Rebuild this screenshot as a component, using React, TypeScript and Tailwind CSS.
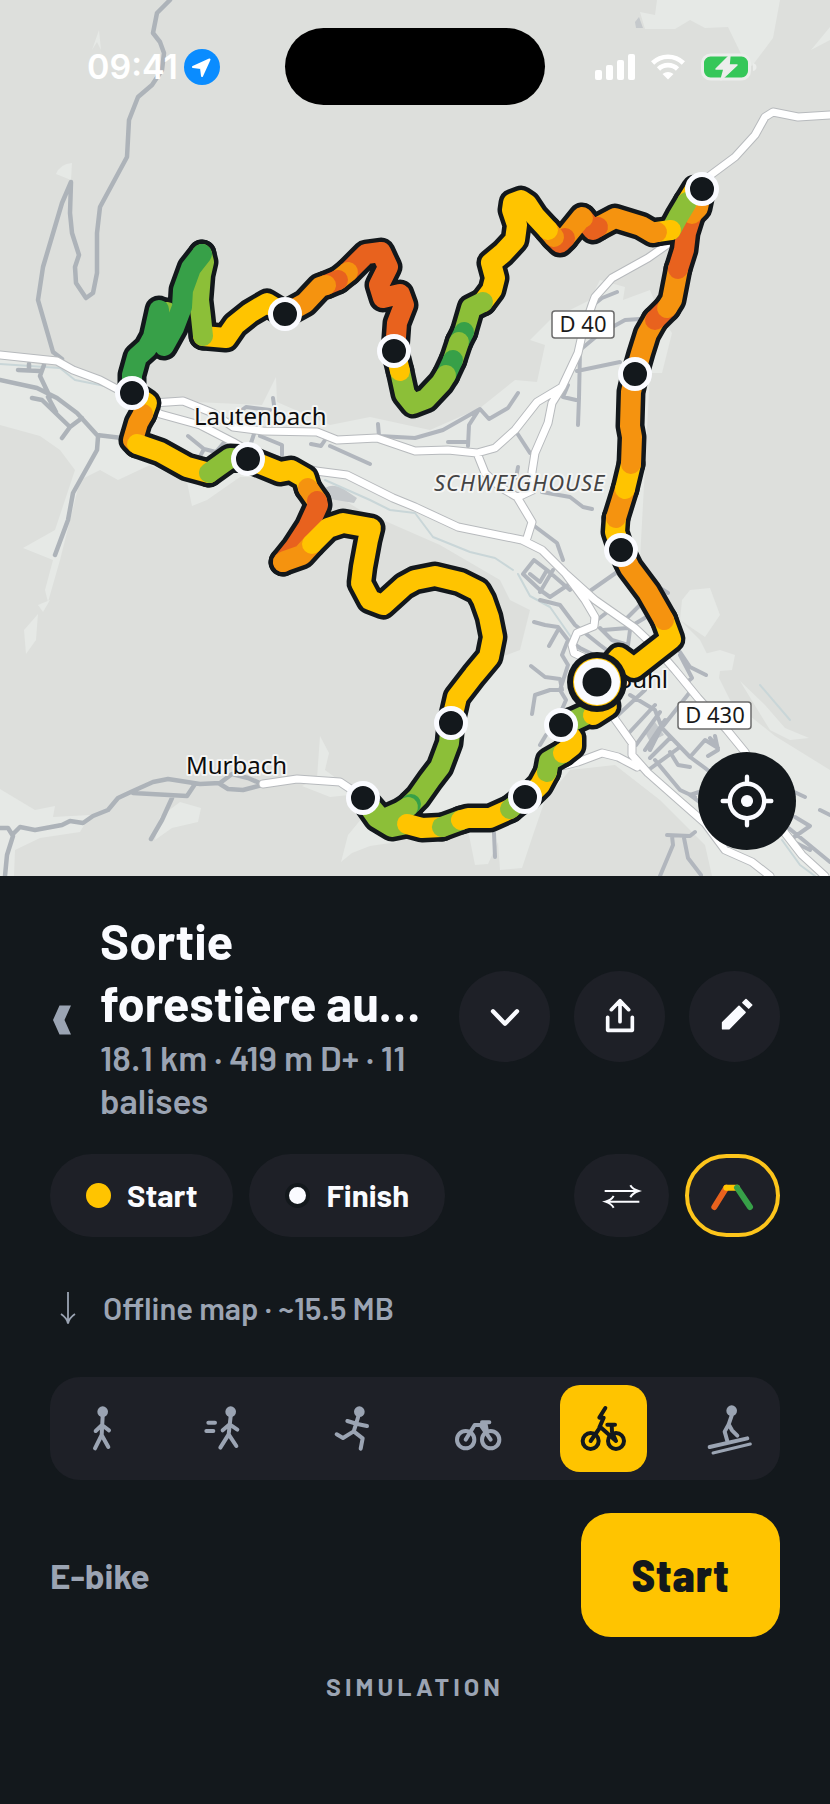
import { useState, type ReactNode } from 'react'

const YELLOW = '#ffc400'
const ORANGE = '#f5930f'
const DEEP = '#e8621e'
const LIME = '#8cbf38'
const GREEN = '#37a048'
const INK = '#13181c'

// Ordered from the departure; earlier sections are painted over later ones.
const sections: { color: string; points: string }[] = [
  { color: YELLOW, points: '597,690 607,706 593,715' },
  { color: LIME, points: '590,713 575,720 561,725' },
  { color: YELLOW, points: '561,725 572,738 572,746 563,753' },
  { color: LIME, points: '563,753 549,761 547,772' },
  { color: YELLOW, points: '547,772 540,785 528,797' },
  { color: LIME, points: '525,797 510,809' },
  { color: YELLOW, points: '510,809 490,818 468,818 461,820' },
  { color: LIME, points: '461,820 442,827' },
  { color: YELLOW, points: '442,827 422,828 407,824' },
  { color: LIME, points: '407,824 392,827 377,818 363,798 382,820 400,812 408,807' },
  { color: GREEN, points: '408,807 411,804' },
  { color: LIME, points: '411,804 418,797 430,780 440,767 449,743 451,723' },
  {
    color: YELLOW,
    points:
      '451,723 457,697 474,675 489,657 493,637 489,617 483,600 478,591 460,582 435,576 415,580 404,586 383,605 370,600 361,583 363,567 368,540 371,528 343,523 328,528 312,544',
  },
  { color: ORANGE, points: '312,544 302,555 285,561 283,562' },
  { color: DEEP, points: '283,562 295,547 308,527 318,505 317,501' },
  { color: ORANGE, points: '317,501 308,488' },
  { color: YELLOW, points: '308,488 305,478 291,470 280,472 248,459' },
  { color: LIME, points: '248,459 230,458 209,473' },
  { color: YELLOW, points: '209,473 187,467 160,452 137,444' },
  { color: ORANGE, points: '137,444 133,440 138,423 143,414' },
  { color: YELLOW, points: '143,414 147,403 132,393' },
  {
    color: GREEN,
    points:
      '132,393 132,375 137,357 147,348 153,337 159,310 160,325 164,346 174,328 182,307 183,290 191,268 202,254',
  },
  { color: LIME, points: '167,312 166,325' },
  { color: LIME, points: '202,254 204,262 201,275 199,300 201,317 203,336' },
  { color: YELLOW, points: '203,336 226,338 235,325 250,313 267,303 285,314' },
  { color: ORANGE, points: '285,314 305,303 320,287 326,285' },
  { color: DEEP, points: '326,285 338,280' },
  { color: ORANGE, points: '338,280 348,272' },
  {
    color: DEEP,
    points: '348,272 366,254 381,252 388,267 379,285 383,298 400,294 404,305 397,323 395,351',
  },
  { color: YELLOW, points: '395,351 400,371' },
  { color: LIME, points: '400,371 405,394 413,404 426,399 441,383 446,375' },
  { color: GREEN, points: '446,375 453,360' },
  { color: LIME, points: '453,360 459,342' },
  { color: GREEN, points: '459,342 464,332' },
  { color: LIME, points: '464,332 471,308 483,302' },
  {
    color: YELLOW,
    points: '483,302 492,290 495,278 491,263 503,253 515,240 517,225 512,210 513,203 521,200 527,204 535,216 548,230',
  },
  { color: ORANGE, points: '548,230 554,237' },
  { color: DEEP, points: '554,237 560,243 565,238' },
  { color: ORANGE, points: '565,238 582,217 583,218' },
  { color: DEEP, points: '583,218 593,230 598,227' },
  { color: ORANGE, points: '598,227 615,218 641,226 653,233 657,232' },
  { color: YELLOW, points: '657,232 671,230' },
  { color: LIME, points: '671,230 678,217 687,202' },
  { color: YELLOW, points: '687,202 695,189 702,189' },
  { color: ORANGE, points: '702,189 698,208 692,214' },
  { color: DEEP, points: '692,214 686,233 684,250 678,269' },
  { color: ORANGE, points: '678,269 672,300 667,308' },
  { color: DEEP, points: '667,308 655,320' },
  { color: ORANGE, points: '655,320 647,334 641,353 635,374 631,392 630,426 632,437 631,464' },
  { color: YELLOW, points: '631,464 625,489' },
  { color: ORANGE, points: '625,489 616,518' },
  { color: YELLOW, points: '616,518 615,532 621,550' },
  { color: ORANGE, points: '621,550 630,568 648,592 664,620' },
  { color: YELLOW, points: '664,620 671,639 634,668 619,657 597,682' },
]

const waypoints = [
  [702, 189],
  [635, 374],
  [621, 550],
  [394, 351],
  [285, 314],
  [132, 393],
  [248, 459],
  [451, 723],
  [363, 798],
  [525, 797],
  [561, 725],
]

const clearings = [
  'M657 0 L655 15 L640 12 L645 29 L675 29 L690 20 L705 28 L728 27 L745 62 L752 66 L773 38 L780 0Z',
  'M811 50 L830 27 L830 40Z',
  'M56 174 Q60 164 72 163 L71 180Z',
  'M92 50 L99 30 L101 50 L97 42Z',
  'M0 358 L60 368 L130 398 L195 402 L262 405 L276 377 L277 402 L330 425 L370 417 L430 430 L480 408 L515 380 L537 382 L545 345 L530 340 L550 320 L590 300 L600 280 L625 287 L623 300 L650 290 L660 315 L672 333 L662 373 L650 373 L640 560 L660 600 L700 640 L730 700 L775 736 L830 770 L830 876 L712 876 L705 845 L660 800 L615 765 L570 770 L545 800 L533 835 L522 868 L500 870 L498 842 L488 864 L475 865 L468 830 L420 836 L395 822 L425 805 L430 790 L470 700 L480 665 L520 650 L530 610 L510 600 L500 580 L440 545 L360 510 L310 478 L240 477 L207 500 L192 506 L187 482 L150 465 L118 480 L100 470 L80 480 L60 560 L48 602 L45 590 L53 560 L23 548 L55 530 L75 470 L60 450 L40 436 L0 425Z',
  'M38 605 L50 600 L43 612Z M24 630 L38 614 L36 640 L26 654Z',
  'M0 789 L35 810 L55 806 L53 817 L90 815 L80 832 L40 838 L15 850 L14 876 L0 876Z',
  'M160 817 L180 802 L201 808 L198 822 L172 828 L155 840Z',
  'M317 778 L320 736 L329 753 L325 770 L340 781 L349 795 L330 797 L302 786Z',
  'M362 818 L388 826 L397 842 L370 846 L352 853 L341 862 L348 835Z',
  'M682 600 L690 590 L710 588 L720 615 L705 637 L680 620Z',
  'M700 655 L720 650 L735 655 L732 670 L720 671 L718 685Z',
  'M740 681 L765 705 L785 728 L809 738 L790 740 L770 730Z',
]

const lanes =
  'M170 0 L157 13 L153 33 L160 42 L164 53 L162 70 L152 85 L138 97 L129 120 L127 157 L100 207 L97 233 L97 273 L93 293 L86 298 L76 283 L75 267 L79 255 L72 233 L70 213 L71 182 L62 203 L43 267 L38 300 L53 352 L62 359 M0 380 L37 388 L57 398 L77 413 L97 435 L122 438 M98 437 L97 450 L73 493 L68 520 L55 555 M44 365 L40 376 L50 397 M32 398 L42 400 L70 427 L62 438 M18 370 L40 371 M29 364 L29 370 M48 397 L56 412 M70 427 L82 418' +
  ' M0 828 L8 828 L13 836 L7 855 L5 876 M13 834 L20 827 L35 830 L62 825 L70 821 L83 823 L93 816 L108 810 L118 798 L133 791 L153 782 L168 779 L200 784 L220 783 L232 774 L248 778 L262 784 M220 784 L228 789 L243 790 L262 785 M133 793 L187 796 L195 784 M172 798 L162 820 L151 839'

const streets =
  'M188 436 L204 449 L198 460 M204 449 L216 452 L226 440 M226 422 L246 407 L270 410 M273 398 L274 405 M260 436 L282 445 L282 455 M250 446 L254 434 M311 444 L321 446 L325 440 M330 446 L370 464 M378 424 L379 436 L415 438 L443 430 L480 409 L489 419 L508 408 L518 393 M478 411 L469 425 L468 446 M448 442 L468 442 M517 433 L530 453 M620 362 L577 371 M580 350 L579 398 L578 425 M580 350 L598 335 L625 320 L640 319 M568 385 L563 397 L576 400 M592 306 L602 298 L617 292 M518 467 L516 478 M542 492 L570 497 L583 507 L592 509' +
  ' M533 525 L557 543 L563 560 M534 560 L523 574 L540 590 L550 597 L568 585 M534 560 L547 570 L540 582 L530 574 M547 570 L570 590 M553 570 L540 592 M590 591 L620 570 M660 588 L668 593 M534 622 L545 625 L558 627 L568 640 L580 648 L598 657 M558 630 L549 646 M568 640 L562 655 L568 665 L560 690 L566 700 L560 714 M531 666 L545 677 L560 679 L562 690 L550 690 L535 695 L532 714 M540 600 L560 605 L575 625 L600 645 L620 660 M597 620 L610 610 L625 620 L640 605 M600 628 L612 640 L628 645 L630 630 M603 630 L628 628 L648 616 M680 652 L690 667 L706 675 M680 655 L692 678 L685 684' +
  ' M630 695 L655 710 L662 728 L690 757 L705 768 M645 690 L618 715 M655 705 L627 735 M660 712 L636 745 M665 720 L645 750 M645 750 L660 730 L690 692 M660 730 L650 750 M670 738 L650 758 M680 747 L647 771 M690 757 L705 740 L718 748 L710 738 M705 768 L720 780 L700 795 L735 765 M655 760 L680 790 L695 797 M715 736 L718 750 L708 756 M670 752 L678 765 L690 767 M735 780 L690 795 L710 810 M494 833 L495 857 M540 745 L546 735 M790 790 L805 797 M795 817 L810 826 L790 840 L810 850 M820 810 L830 815 M785 825 L830 862 M667 835 L690 836 L695 832 M672 836 L673 845 L660 876 M684 838 L688 858 L701 875'

const roads =
  'M0 355 L57 361 L73 370 L100 380 L132 397 L160 414 L200 425 L233 442 L250 452 L316 471 L347 475 L393 498 L415 507 L458 527 L522 540 L542 550 L565 573 L595 600 L635 628 L655 647 L675 670 L698 698 L727 730 L745 752 L785 833 L802 855 L825 876 M565 573 L585 600 L595 617 L594 626 L577 633 L572 645 L574 653 L585 658 M597 690 L612 715 L632 743 L632 755 L648 773 L682 803 L705 823 L725 850 L752 862 L770 876 M562 766 L578 762 L602 753 L618 757 L637 767 M153 403 L183 401 L213 413 L233 427 L263 431 L317 432 L337 440 L377 438 L415 451 L448 450 L477 453 L495 448 L515 430 L537 402 L562 387 L578 353 L582 335 L592 305 L595 297 L612 278 L648 258 L668 244 M704 180 L735 157 L755 135 L765 117 L773 112 L798 117 L830 115 M562 387 L552 403 L548 423 L535 453 L532 472 L533 490 L518 497 M477 453 L485 473 L500 487 L517 497 L532 522 L527 538 M263 784 L297 779 L340 782 L358 794'

const rivers =
  'M0 364 L60 368 L75 380 L110 387 M325 480 L370 500 L390 510 L415 513 L433 537 L470 552 L495 558 L513 570 M518 574 L530 596 L550 607 L580 650 M760 685 L790 720 M782 840 L800 865 L815 876'

function TrailMap() {
  return (
    <svg viewBox="0 0 830 876" className="block h-auto w-full bg-[#dddfdc]" role="img" aria-label="Trail map">
      <g fill="#e6e9e6">
        {clearings.map((d) => (
          <path key={d} d={d} />
        ))}
      </g>
      <g fill="#c5c9cc">
        <path d="M639 17 L643 28 L636 28 L635 22Z" />
        <path d="M325 488 Q335 482 348 492 L357 498 L354 503 L330 499Z" />
        <path d="M645 732 L655 722 L664 735 L650 742Z" />
      </g>
      <g fill="none" strokeLinecap="round" strokeLinejoin="round">
        <path d={rivers} stroke="#c9d6d8" strokeWidth="2" />
        <path d={lanes} stroke="#adb3b9" strokeWidth="4.5" />
        <path d={streets} stroke="#b1b6bd" strokeWidth="4" />
        <path d={roads} stroke="#b7babd" strokeWidth="9" />
        <path d={roads} stroke="#ffffff" strokeWidth="7" />
      </g>

      <g
        className="font-['Noto_Sans',sans-serif]"
        fill="#0c0c0c"
        stroke="#f4f5f4"
        strokeWidth="4"
        strokeLinejoin="round"
        style={{ paintOrder: 'stroke' }}
      >
        <text x="194" y="425" className="text-[24px]">
          Lautenbach
        </text>
        <text x="186" y="774" className="text-[24px]">
          Murbach
        </text>
        <text x="668" y="688" textAnchor="end" className="text-[24px]">
          Buhl
        </text>
        <text x="434" y="491" fill="#444444" className="text-[22px] tracking-[1px] italic">
          SCHWEIGHOUSE
        </text>
      </g>
      <g className="font-['Noto_Sans',sans-serif] text-[22px]" fill="#1a1a1a" textAnchor="middle">
        <rect x="552" y="311" width="62" height="27" rx="3" fill="#fff" stroke="#6b6b6b" strokeWidth="1.5" />
        <text x="583" y="332">
          D 40
        </text>
        <rect x="678" y="702" width="73" height="27" rx="3" fill="#fff" stroke="#6b6b6b" strokeWidth="1.5" />
        <text x="715" y="723">
          D 430
        </text>
      </g>

      <g fill="none" strokeLinecap="round" strokeLinejoin="round">
        {sections.map((s) => (
          <polyline key={s.points} points={s.points} stroke={INK} strokeWidth="29" />
        ))}
        {[...sections].reverse().map((s) => (
          <polyline key={s.points} points={s.points} stroke={s.color} strokeWidth="20" />
        ))}
      </g>
      {waypoints.map(([x, y]) => (
        <circle key={`${x}-${y}`} cx={x} cy={y} r="14.5" fill={INK} stroke="#fafbff" strokeWidth="5" />
      ))}
      <circle cx="597" cy="682" r="30" fill={INK} />
      <circle cx="597" cy="682" r="24" fill={YELLOW} />
      <circle cx="597" cy="682" r="23" fill="#fafbff" />
      <circle cx="597" cy="682" r="14.5" fill={INK} />
    </svg>
  )
}

function StatusBar() {
  return (
    <div className="absolute inset-x-0 top-7 grid h-[77px] grid-cols-[1fr_auto_1fr] items-center">
      <div className="flex items-center gap-[6px] pl-[87px]">
        <span className="font-['Inter',sans-serif] text-[34px] leading-none font-semibold text-white">09:41</span>
        <svg viewBox="0 0 36 36" className="size-9 shrink-0">
          <circle cx="18" cy="18" r="18" fill="#0a8cff" />
          <path d="M25.5 10.5 L18 27 L17 19 L9 18Z" fill="#fff" stroke="#fff" strokeWidth="2" strokeLinejoin="round" />
        </svg>
      </div>
      <div className="h-[77px] w-[260px] rounded-full bg-black" />
      <div className="flex items-center justify-end gap-4 pr-[73px]">
        <svg viewBox="0 0 40 26" className="h-[26px] w-10" fill="#fff">
          <rect x="0" y="16" width="7" height="10" rx="2" />
          <rect x="11" y="11" width="7" height="15" rx="2" />
          <rect x="22" y="6" width="7" height="20" rx="2" />
          <rect x="33" y="0" width="7" height="26" rx="2" />
        </svg>
        <svg viewBox="0 0 34 26" className="h-[26px] w-[34px]" fill="none" stroke="#fff" strokeWidth="4.6">
          <path d="M1.6 9 A22 22 0 0 1 32.4 9" />
          <path d="M7.5 15 A13.5 13.5 0 0 1 26.5 15" />
          <path d="M17 25.5 L11.5 20 Q17 15.8 22.5 20Z" fill="#fff" stroke="none" />
        </svg>
        <svg viewBox="0 0 56 28" className="h-7 w-14">
          <rect x="1.5" y="2" width="47" height="24" rx="8" fill="#35c759" stroke="#ebedeb" strokeWidth="3" />
          <path d="M52 10 Q55.5 11 55.5 14 Q55.5 17 52 18Z" fill="#ebedeb" />
          <path
            d="M29 2 L15 16 H23 L20 27 L36 12 H28Z"
            fill="#ebedeb"
            stroke="#ebedeb"
            strokeWidth="1.5"
            strokeLinejoin="round"
          />
        </svg>
      </div>
    </div>
  )
}

function RoundButton({ label, children }: { label: string; children: ReactNode }) {
  return (
    <button
      type="button"
      aria-label={label}
      className="flex size-[91px] items-center justify-center rounded-full bg-[#1e2027] text-[#fafbff]"
    >
      <svg
        viewBox="-60 -60 120 120"
        className="size-10"
        fill="none"
        stroke="currentColor"
        strokeWidth="13"
        strokeLinecap="round"
        strokeLinejoin="round"
      >
        {children}
      </svg>
    </button>
  )
}

const activities: { id: string; label: string; icon: ReactNode }[] = [
  {
    id: 'hike',
    label: 'Hike',
    icon: (
      <>
        <circle cx="74" cy="20" r="16" fill="currentColor" stroke="none" />
        <path d="M74 34 L71 90 M53 78 L72 60 L93 76 M51 130 L71 90 L91 126" />
      </>
    ),
  },
  {
    id: 'fast-hike',
    label: 'Fast hike',
    icon: (
      <>
        <circle cx="83" cy="20" r="16" fill="currentColor" stroke="none" />
        <path d="M83 34 L77 88 M59 76 L80 58 L103 74 M52 128 L77 88 L100 123 M16 53 H36 M10 78 H31" />
      </>
    ),
  },
  {
    id: 'run',
    label: 'Run',
    icon: (
      <>
        <circle cx="94" cy="20" r="16" fill="currentColor" stroke="none" />
        <path d="M91 34 L77 80 M58 48 L88 57 L117 63 M26 88 L45 99 L77 79 L104 100 L98 131" />
      </>
    ),
  },
  {
    id: 'bike',
    label: 'Bike',
    icon: (
      <>
        <circle cx="35" cy="104" r="26" />
        <circle cx="110" cy="104" r="26" />
        <path d="M35 104 L62 60 H92 M80 60 L110 104 M94 54 L98 74 M84 52 H106" />
      </>
    ),
  },
  {
    id: 'e-bike',
    label: 'E-bike',
    icon: (
      <>
        <circle cx="35" cy="108" r="24" />
        <circle cx="111" cy="108" r="24" />
        <path d="M35 108 L64 66 L111 108 M79 9 L61 38 H74 L61 68 M85 59 H108 M98 59 L99 80 L111 108" />
      </>
    ),
  },
  {
    id: 'ski',
    label: 'Ski touring',
    icon: (
      <>
        <circle cx="83" cy="17" r="16" fill="currentColor" stroke="none" />
        <path d="M83 32 L74 58 L62 80 L70 108 M74 58 L84 76 L100 92" />
        <path d="M17 126 L130 100" />
        <path d="M27 144 L139 117" strokeWidth="9" />
      </>
    ),
  },
]

export default function App() {
  const [activity, setActivity] = useState('e-bike')
  const current = activities.find((a) => a.id === activity)

  return (
    <div className="min-h-screen bg-[#13181c] font-['Barlow','Roboto',sans-serif] text-[#fafbff]">
      <div className="relative">
        <TrailMap />
        <StatusBar />
        <button
          type="button"
          aria-label="Locate me"
          className="absolute right-[34px] bottom-[26px] flex size-[98px] items-center justify-center rounded-full bg-[#13181c]"
        >
          <svg viewBox="-80 -80 160 160" className="size-[54px]" stroke="#fafbff" strokeWidth="13" strokeLinecap="round">
            <circle r="51" fill="none" />
            <circle r="18" fill="#fafbff" stroke="none" />
            <path d="M0 -72 V-54 M0 72 V54 M-72 0 H-54 M72 0 H54" />
          </svg>
        </button>
      </div>

      <main className="px-[50px] pt-[34px] pb-24">
        <header className="flex items-center">
          <button type="button" aria-label="Back" className="w-[50px] shrink-0 pt-2 text-[#9ba4b3]">
            <svg viewBox="0 0 24 30" className="h-[30px] w-6" fill="currentColor">
              <path d="M9.5 0.500 H21 L14.5 15 L21 29.500 H9.5 L3 15Z" />
            </svg>
          </button>
          <div className="min-w-0 flex-1">
            <h1 className="text-[49px] leading-[62px] font-bold">Sortie forestière au…</h1>
            <p className="mt-[2px] text-[35px] leading-[43px] font-semibold text-[#9ba4b3]">
              18.1 km · 419 m D+ · 11 balises
            </p>
          </div>
          <div className="ml-6 flex shrink-0 gap-6">
            <RoundButton label="Collapse">
              <path d="M-36 -14 L0 23 L36 -14" />
            </RoundButton>
            <RoundButton label="Share">
              <path d="M0 -44 V17 M-26 -19 L0 -46 L26 -19 M-37 4 V43 H37 V4" strokeWidth="11" />
            </RoundButton>
            <RoundButton label="Edit">
              <path
                d="M-37 38 V20 L12 -29 L30 -11 L-18 38Z M24 -40 L33 -49 L50 -33 L41 -24Z"
                fill="currentColor"
                strokeWidth="5"
              />
            </RoundButton>
          </div>
        </header>

        <div className="mt-8 flex items-center gap-4 text-[31px] font-bold">
          <button type="button" className="flex h-[83px] items-center gap-4 rounded-full bg-[#1e2027] px-9">
            <span className="size-[25px] rounded-full bg-[#ffc400]" />
            Start
          </button>
          <button type="button" className="flex h-[83px] items-center gap-4 rounded-full bg-[#1e2027] px-9">
            <span className="size-[25px] rounded-full border-4 border-[#13181c] bg-[#fafbff]" />
            Finish
          </button>
          <button
            type="button"
            aria-label="Reverse direction"
            className="ml-auto flex h-[83px] w-[95px] items-center justify-center rounded-full bg-[#1e2027]"
          >
            <svg viewBox="-60 -60 120 120" className="size-10" fill="none" stroke="currentColor" strokeWidth="6">
              <path d="M-52 -15 H50 M25 -32 Q32 -20 50 -15 Q32 -9 25 4" />
              <path d="M52 17 H-50 M-25 0 Q-32 12 -50 17 Q-32 23 -25 35" />
            </svg>
          </button>
          <button
            type="button"
            aria-label="Show gradient"
            aria-pressed="true"
            className="flex h-[83px] w-[95px] items-center justify-center rounded-full border-4 border-[#fdc51b] bg-[#1e2027]"
          >
            <svg viewBox="-66 -66 132 132" className="size-11" fill="none" strokeWidth="18" strokeLinecap="round">
              <path d="M-56 33 L-20 -25" stroke="#e8621e" />
              <path d="M-20 -25 H12" stroke="#ffc400" />
              <path d="M12 -25 L51 33" stroke="#37a048" />
            </svg>
          </button>
        </div>

        <button
          type="button"
          className="mt-[49px] flex h-11 items-center gap-[27px] pl-[10px] text-[31px] font-semibold text-[#9ba4b3]"
        >
          <svg viewBox="0 0 16 34" className="h-[34px] w-4" fill="none" stroke="currentColor" strokeWidth="1.8">
            <path d="M8 1 V32 M1 23 Q7 27 8 32.500 Q9 27 15 23" />
          </svg>
          Offline map · ~15.5 MB
        </button>

        <div className="mt-[47px] flex justify-between rounded-[30px] bg-[#1e2027] p-2" role="group" aria-label="Activity">
          {activities.map((a) => (
            <button
              key={a.id}
              type="button"
              aria-label={a.label}
              aria-pressed={a.id === activity}
              onClick={() => setActivity(a.id)}
              className={`flex size-[87px] items-center justify-center rounded-[20px] ${
                a.id === activity ? 'bg-[#ffc400] text-[#13181c]' : 'text-[#9ba4b3]'
              }`}
            >
              <svg
                viewBox="0 0 144 144"
                className="size-12 overflow-visible"
                fill="none"
                stroke="currentColor"
                strokeWidth="12"
                strokeLinecap="round"
                strokeLinejoin="round"
              >
                {a.icon}
              </svg>
            </button>
          ))}
        </div>

        <div className="mt-[33px] flex items-center justify-between">
          <span className="text-[35px] font-bold text-[#9ba4b3]">{current?.label}</span>
          <button
            type="button"
            className="h-[124px] min-w-[199px] rounded-[30px] bg-[#ffc400] px-10 font-['Barlow_Semi_Condensed','Barlow','Roboto',sans-serif] text-[45px] font-extrabold tracking-[1px] text-[#13181c]"
          >
            Start
          </button>
        </div>

        <p className="mt-8 text-center text-[25px] leading-[34px] font-bold tracking-[4px] text-[#9ba4b3]">SIMULATION</p>
      </main>
    </div>
  )
}
